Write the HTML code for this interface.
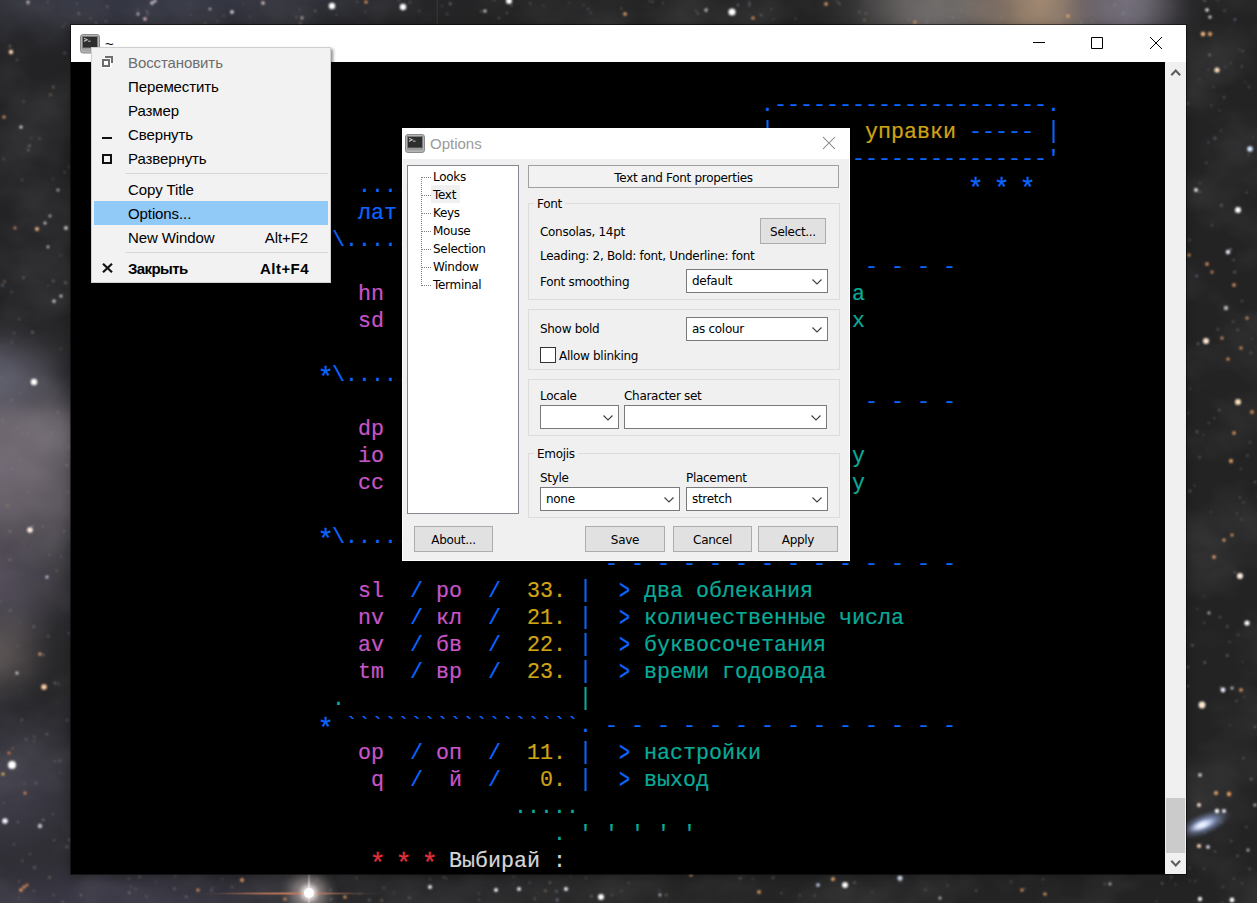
<!DOCTYPE html>
<html lang="ru"><head><meta charset="utf-8"><title>~</title>
<style>
html,body{margin:0;padding:0}
body{width:1257px;height:903px;overflow:hidden;position:relative;background:#26262a;font-family:"Liberation Sans",sans-serif}
#wall{position:absolute;left:0;top:0}
.st{position:absolute;border-radius:50%}
#win{position:absolute;left:71px;top:25px;width:1115px;height:849px;background:#000;box-shadow:0 0 0 1px rgba(0,0,0,.5),0 2px 10px rgba(0,0,0,.3)}
#tb{position:absolute;left:0;top:0;width:1115px;height:37px;background:#fff}
#term{position:absolute;left:1px;top:38px;width:1093px;height:811px;overflow:hidden;
 font-family:"Liberation Mono","DejaVu Sans Mono",monospace;font-size:21.6667px;line-height:27px;white-space:pre}
.r{position:absolute;left:0;height:27px;width:1093px}
.r span{position:absolute;top:2px;-webkit-text-stroke:0.2px currentColor}
.as{transform:translateY(3.6px) scale(1.25,1.3)}.vb{transform:scaleY(1.09);transform-origin:50% 80%}.gt{transform:translateY(1px) scale(.85,1.25)}
.b{color:#0a66ff}.p{color:#c855c8}.y{color:#cfa414}.t{color:#0aab98}.rd{color:#e0303c}.w{color:#d6d6d6}
#sb{position:absolute;left:1094px;top:37px;width:21px;height:812px;background:#f0f0f0}
#sbth{position:absolute;left:1px;top:736px;width:19px;height:55px;background:#cbcbcb}
#dlg{position:absolute;left:402px;top:128px;width:448px;height:433px;background:#fff;font-family:"DejaVu Sans","Liberation Sans",sans-serif;font-size:12px;letter-spacing:-0.3px;color:#000}
#dlg>*{position:absolute}
.dbody{left:1px;top:31px;width:446px;height:401px;background:#f0f0f0}
.dtitle{left:28px;top:6px;font:15px/19px "Liberation Sans",sans-serif;letter-spacing:0;color:#9a9a9a}
.lb{left:5px;top:37px;width:112px;height:349px;border:1px solid #828790;background:#fff;box-sizing:border-box}
.lb>*{position:absolute}
.ti{left:25px;height:18px;line-height:18px;white-space:nowrap}
.ti i{position:absolute;left:-11px;top:9px;width:9px;height:0;border-top:1px dotted #808080}
.vl{left:13px;top:11px;width:0;height:109px;border-left:1px dotted #808080}
.sel{left:23px;top:19px;width:29px;height:18px;background:#f0f0f0}
.ptitle{left:126px;top:37px;width:311px;height:23px;border:1px solid #a0a0a0;background:#f2f2f2;text-align:center;line-height:24px;box-sizing:border-box}
.grp{border:1px solid #dcdcdc;box-sizing:border-box}
.gl{background:#f0f0f0;padding:0 3px}
.lbl{line-height:16px;white-space:nowrap}
.btn{height:26px;border:1px solid #adadad;background:#e1e1e1;text-align:center;line-height:26px;box-sizing:border-box}
.cmb{height:24px;border:1px solid #7a7a7a;background:#fff;line-height:22px;padding-left:5px;box-sizing:border-box;white-space:nowrap}
.cmb svg{position:absolute;right:5px;top:9px}
.chk{width:16px;height:16px;border:1px solid #333;background:#fff;box-sizing:border-box}
#menu{position:absolute;left:91px;top:47px;width:238px;height:234px;border:1px solid #cfcfcf;background:#f2f2f2;box-shadow:2px 2px 3px rgba(0,0,0,.45);font:15px/24px "Liberation Sans",sans-serif;color:#000;letter-spacing:-0.1px}
.mi{position:absolute;left:2px;width:200px;height:24px;padding-left:34px;white-space:nowrap}
.mi.dis{color:#6d6d6d}
.hlb{position:absolute;left:2px;top:153px;width:234px;height:24px;background:#91c9f7}
.mi.bd{font-weight:bold;letter-spacing:-0.6px}
.sc{position:absolute;right:20px;top:0}
.ms{position:absolute;left:33px;width:203px;height:1px;background:#d7d7d7}
.bd .sc{letter-spacing:.45px;right:19px}
</style></head><body>
<svg id="wall" width="1257" height="903" viewBox="0 0 1257 903">
<defs><filter id="b1" x="-10%" y="-10%" width="120%" height="120%"><feGaussianBlur stdDeviation="0.8"/></filter><linearGradient id="lg" x1="0" x2="1" y1="0" y2="0"><stop offset="0" stop-color="#232325"/><stop offset="0.5" stop-color="#242425"/><stop offset="1" stop-color="#232324"/></linearGradient><filter id="tx" x="0" y="0" width="100%" height="100%"><feTurbulence type="fractalNoise" baseFrequency="0.012 0.016" numOctaves="4" seed="7"/><feColorMatrix type="matrix" values="0 0 0 0 0.58  0 0 0 0 0.57  0 0 0 0 0.6  1.6 0 0 0 -0.62"/></filter><radialGradient id="g1"><stop offset="0" stop-color="#6e6670" stop-opacity="1.000"/><stop offset="0.25" stop-color="#6e6670" stop-opacity="0.860"/><stop offset="0.45" stop-color="#6e6670" stop-opacity="0.580"/><stop offset="0.65" stop-color="#6e6670" stop-opacity="0.280"/><stop offset="0.82" stop-color="#6e6670" stop-opacity="0.090"/><stop offset="1" stop-color="#6e6670" stop-opacity="0.000"/></radialGradient><radialGradient id="g2"><stop offset="0" stop-color="#5a5a68" stop-opacity="1.000"/><stop offset="0.25" stop-color="#5a5a68" stop-opacity="0.860"/><stop offset="0.45" stop-color="#5a5a68" stop-opacity="0.580"/><stop offset="0.65" stop-color="#5a5a68" stop-opacity="0.280"/><stop offset="0.82" stop-color="#5a5a68" stop-opacity="0.090"/><stop offset="1" stop-color="#5a5a68" stop-opacity="0.000"/></radialGradient><radialGradient id="g3"><stop offset="0" stop-color="#524d59" stop-opacity="1.000"/><stop offset="0.25" stop-color="#524d59" stop-opacity="0.860"/><stop offset="0.45" stop-color="#524d59" stop-opacity="0.580"/><stop offset="0.65" stop-color="#524d59" stop-opacity="0.280"/><stop offset="0.82" stop-color="#524d59" stop-opacity="0.090"/><stop offset="1" stop-color="#524d59" stop-opacity="0.000"/></radialGradient><radialGradient id="g4"><stop offset="0" stop-color="#645c5c" stop-opacity="0.850"/><stop offset="0.25" stop-color="#645c5c" stop-opacity="0.731"/><stop offset="0.45" stop-color="#645c5c" stop-opacity="0.493"/><stop offset="0.65" stop-color="#645c5c" stop-opacity="0.238"/><stop offset="0.82" stop-color="#645c5c" stop-opacity="0.076"/><stop offset="1" stop-color="#645c5c" stop-opacity="0.000"/></radialGradient><radialGradient id="g5"><stop offset="0" stop-color="#3c3a45" stop-opacity="1.000"/><stop offset="0.25" stop-color="#3c3a45" stop-opacity="0.860"/><stop offset="0.45" stop-color="#3c3a45" stop-opacity="0.580"/><stop offset="0.65" stop-color="#3c3a45" stop-opacity="0.280"/><stop offset="0.82" stop-color="#3c3a45" stop-opacity="0.090"/><stop offset="1" stop-color="#3c3a45" stop-opacity="0.000"/></radialGradient><radialGradient id="g6"><stop offset="0" stop-color="#766f78" stop-opacity="0.700"/><stop offset="0.25" stop-color="#766f78" stop-opacity="0.602"/><stop offset="0.45" stop-color="#766f78" stop-opacity="0.406"/><stop offset="0.65" stop-color="#766f78" stop-opacity="0.196"/><stop offset="0.82" stop-color="#766f78" stop-opacity="0.063"/><stop offset="1" stop-color="#766f78" stop-opacity="0.000"/></radialGradient><radialGradient id="g7"><stop offset="0" stop-color="#26262a" stop-opacity="0.750"/><stop offset="0.25" stop-color="#26262a" stop-opacity="0.645"/><stop offset="0.45" stop-color="#26262a" stop-opacity="0.435"/><stop offset="0.65" stop-color="#26262a" stop-opacity="0.210"/><stop offset="0.82" stop-color="#26262a" stop-opacity="0.068"/><stop offset="1" stop-color="#26262a" stop-opacity="0.000"/></radialGradient><radialGradient id="g8"><stop offset="0" stop-color="#2e2d31" stop-opacity="0.600"/><stop offset="0.25" stop-color="#2e2d31" stop-opacity="0.516"/><stop offset="0.45" stop-color="#2e2d31" stop-opacity="0.348"/><stop offset="0.65" stop-color="#2e2d31" stop-opacity="0.168"/><stop offset="0.82" stop-color="#2e2d31" stop-opacity="0.054"/><stop offset="1" stop-color="#2e2d31" stop-opacity="0.000"/></radialGradient><radialGradient id="g9"><stop offset="0" stop-color="#363845" stop-opacity="1.000"/><stop offset="0.25" stop-color="#363845" stop-opacity="0.860"/><stop offset="0.45" stop-color="#363845" stop-opacity="0.580"/><stop offset="0.65" stop-color="#363845" stop-opacity="0.280"/><stop offset="0.82" stop-color="#363845" stop-opacity="0.090"/><stop offset="1" stop-color="#363845" stop-opacity="0.000"/></radialGradient><radialGradient id="g10"><stop offset="0" stop-color="#6c6866" stop-opacity="1.000"/><stop offset="0.25" stop-color="#6c6866" stop-opacity="0.860"/><stop offset="0.45" stop-color="#6c6866" stop-opacity="0.580"/><stop offset="0.65" stop-color="#6c6866" stop-opacity="0.280"/><stop offset="0.82" stop-color="#6c6866" stop-opacity="0.090"/><stop offset="1" stop-color="#6c6866" stop-opacity="0.000"/></radialGradient><radialGradient id="g11"><stop offset="0" stop-color="#a08872" stop-opacity="1.000"/><stop offset="0.25" stop-color="#a08872" stop-opacity="0.860"/><stop offset="0.45" stop-color="#a08872" stop-opacity="0.580"/><stop offset="0.65" stop-color="#a08872" stop-opacity="0.280"/><stop offset="0.82" stop-color="#a08872" stop-opacity="0.090"/><stop offset="1" stop-color="#a08872" stop-opacity="0.000"/></radialGradient><radialGradient id="g12"><stop offset="0" stop-color="#726d79" stop-opacity="1.000"/><stop offset="0.25" stop-color="#726d79" stop-opacity="0.860"/><stop offset="0.45" stop-color="#726d79" stop-opacity="0.580"/><stop offset="0.65" stop-color="#726d79" stop-opacity="0.280"/><stop offset="0.82" stop-color="#726d79" stop-opacity="0.090"/><stop offset="1" stop-color="#726d79" stop-opacity="0.000"/></radialGradient><radialGradient id="g13"><stop offset="0" stop-color="#7a6a60" stop-opacity="0.600"/><stop offset="0.25" stop-color="#7a6a60" stop-opacity="0.516"/><stop offset="0.45" stop-color="#7a6a60" stop-opacity="0.348"/><stop offset="0.65" stop-color="#7a6a60" stop-opacity="0.168"/><stop offset="0.82" stop-color="#7a6a60" stop-opacity="0.054"/><stop offset="1" stop-color="#7a6a60" stop-opacity="0.000"/></radialGradient><radialGradient id="g14"><stop offset="0" stop-color="#3b3946" stop-opacity="1.000"/><stop offset="0.25" stop-color="#3b3946" stop-opacity="0.860"/><stop offset="0.45" stop-color="#3b3946" stop-opacity="0.580"/><stop offset="0.65" stop-color="#3b3946" stop-opacity="0.280"/><stop offset="0.82" stop-color="#3b3946" stop-opacity="0.090"/><stop offset="1" stop-color="#3b3946" stop-opacity="0.000"/></radialGradient><radialGradient id="g15"><stop offset="0" stop-color="#9db4ea" stop-opacity="0.950"/><stop offset="0.25" stop-color="#9db4ea" stop-opacity="0.817"/><stop offset="0.45" stop-color="#9db4ea" stop-opacity="0.551"/><stop offset="0.65" stop-color="#9db4ea" stop-opacity="0.266"/><stop offset="0.82" stop-color="#9db4ea" stop-opacity="0.085"/><stop offset="1" stop-color="#9db4ea" stop-opacity="0.000"/></radialGradient><radialGradient id="g16"><stop offset="0" stop-color="#eef2ff" stop-opacity="1.000"/><stop offset="0.25" stop-color="#eef2ff" stop-opacity="0.860"/><stop offset="0.45" stop-color="#eef2ff" stop-opacity="0.580"/><stop offset="0.65" stop-color="#eef2ff" stop-opacity="0.280"/><stop offset="0.82" stop-color="#eef2ff" stop-opacity="0.090"/><stop offset="1" stop-color="#eef2ff" stop-opacity="0.000"/></radialGradient><radialGradient id="g17"><stop offset="0" stop-color="#cfc0bc" stop-opacity="0.750"/><stop offset="0.25" stop-color="#cfc0bc" stop-opacity="0.645"/><stop offset="0.45" stop-color="#cfc0bc" stop-opacity="0.435"/><stop offset="0.65" stop-color="#cfc0bc" stop-opacity="0.210"/><stop offset="0.82" stop-color="#cfc0bc" stop-opacity="0.068"/><stop offset="1" stop-color="#cfc0bc" stop-opacity="0.000"/></radialGradient><radialGradient id="g18"><stop offset="0" stop-color="#c07858" stop-opacity="0.900"/><stop offset="0.25" stop-color="#c07858" stop-opacity="0.774"/><stop offset="0.45" stop-color="#c07858" stop-opacity="0.522"/><stop offset="0.65" stop-color="#c07858" stop-opacity="0.252"/><stop offset="0.82" stop-color="#c07858" stop-opacity="0.081"/><stop offset="1" stop-color="#c07858" stop-opacity="0.000"/></radialGradient><radialGradient id="g19"><stop offset="0" stop-color="#d8d0d8" stop-opacity="0.850"/><stop offset="0.25" stop-color="#d8d0d8" stop-opacity="0.731"/><stop offset="0.45" stop-color="#d8d0d8" stop-opacity="0.493"/><stop offset="0.65" stop-color="#d8d0d8" stop-opacity="0.238"/><stop offset="0.82" stop-color="#d8d0d8" stop-opacity="0.076"/><stop offset="1" stop-color="#d8d0d8" stop-opacity="0.000"/></radialGradient><radialGradient id="g20"><stop offset="0" stop-color="#ffffff" stop-opacity="1.000"/><stop offset="0.25" stop-color="#ffffff" stop-opacity="0.860"/><stop offset="0.45" stop-color="#ffffff" stop-opacity="0.580"/><stop offset="0.65" stop-color="#ffffff" stop-opacity="0.280"/><stop offset="0.82" stop-color="#ffffff" stop-opacity="0.090"/><stop offset="1" stop-color="#ffffff" stop-opacity="0.000"/></radialGradient></defs>
<rect width="1257" height="903" fill="url(#lg)"/>
<ellipse cx="-10" cy="470" rx="230" ry="165" fill="url(#g1)"/>
<ellipse cx="-5" cy="378" rx="85" ry="58" fill="url(#g2)"/>
<ellipse cx="-10" cy="585" rx="110" ry="85" fill="url(#g3)"/>
<ellipse cx="-10" cy="655" rx="80" ry="60" fill="url(#g4)"/>
<ellipse cx="5" cy="790" rx="150" ry="130" fill="url(#g5)"/>
<ellipse cx="30" cy="428" rx="110" ry="34" fill="url(#g6)" transform="rotate(10 30 428)"/>
<ellipse cx="74" cy="372" rx="30" ry="55" fill="url(#g7)"/>
<ellipse cx="72" cy="610" rx="24" ry="120" fill="url(#g8)"/>
<ellipse cx="150" cy="-6" rx="330" ry="70" fill="url(#g9)"/>
<ellipse cx="935" cy="0" rx="120" ry="130" fill="url(#g10)"/>
<ellipse cx="1040" cy="0" rx="95" ry="130" fill="url(#g11)"/>
<ellipse cx="1125" cy="0" rx="80" ry="130" fill="url(#g12)"/>
<ellipse cx="990" cy="10" rx="40" ry="22" fill="url(#g13)"/>
<ellipse cx="110" cy="905" rx="300" ry="70" fill="url(#g14)"/>
<rect x="436.5" y="0" width="1.6" height="24" fill="#6a4038" opacity="0.35"/>
<rect width="1257" height="903" filter="url(#tx)" opacity="0.14"/>
<ellipse cx="1204" cy="824" rx="30" ry="12" fill="url(#g15)" transform="rotate(-22 1204 824)"/>
<ellipse cx="1202" cy="825" rx="15" ry="6" fill="url(#g16)" transform="rotate(-22 1202 825)"/>
<ellipse cx="309" cy="893" rx="30" ry="30" fill="url(#g17)"/>
<ellipse cx="290" cy="893.5" rx="95" ry="2.2" fill="url(#g18)"/>
<ellipse cx="309" cy="890" rx="2.2" ry="24" fill="url(#g19)"/>
<ellipse cx="309" cy="893" rx="12" ry="12" fill="url(#g20)"/>
<circle cx="309" cy="893" r="5" fill="#fff"/>
<g filter="url(#b1)" opacity="0.6"><circle cx="43.6" cy="655.0" r="1.3" fill="#8a8a92"/><circle cx="58.8" cy="684.0" r="0.9" fill="#8890a8"/><circle cx="3.6" cy="159.0" r="1" fill="#a08870"/><circle cx="60.8" cy="348.9" r="0.8" fill="#b08a68"/><circle cx="17.5" cy="646.0" r="1.1" fill="#7c7c86"/><circle cx="12.7" cy="761.6" r="1.1" fill="#9a9aa2"/><circle cx="53.3" cy="87.0" r="1.3" fill="#b08a68"/><circle cx="31.1" cy="138.1" r="0.8" fill="#9a9aa2"/><circle cx="54.2" cy="840.2" r="0.9" fill="#a8a8b0"/><circle cx="11.7" cy="292.0" r="0.9" fill="#b08a68"/><circle cx="61.3" cy="556.6" r="0.9" fill="#8890a8"/><circle cx="13.8" cy="844.4" r="1.1" fill="#7c7c86"/><circle cx="1.5" cy="377.8" r="0.9" fill="#7c7c86"/><circle cx="4.6" cy="281.6" r="1.3" fill="#b08a68"/><circle cx="0.2" cy="600.9" r="1" fill="#8a8a92"/><circle cx="21.7" cy="720.1" r="1.1" fill="#8890a8"/><circle cx="22.1" cy="434.1" r="0.9" fill="#8a8a92"/><circle cx="17.9" cy="822.3" r="1" fill="#a8a8b0"/><circle cx="28.3" cy="491.6" r="1.1" fill="#7c7c86"/><circle cx="26.3" cy="739.4" r="1.1" fill="#8a8a92"/><circle cx="49.5" cy="554.9" r="0.9" fill="#8a8a92"/><circle cx="52.9" cy="814.3" r="1.1" fill="#7c7c86"/><circle cx="35.9" cy="783.0" r="1" fill="#a8a8b0"/><circle cx="32.4" cy="526.1" r="1" fill="#a8a8b0"/><circle cx="20.7" cy="393.2" r="0.8" fill="#9a9aa2"/><circle cx="23.9" cy="544.0" r="0.9" fill="#7c7c86"/><circle cx="19.3" cy="621.8" r="0.8" fill="#7c7c86"/><circle cx="48.0" cy="285.6" r="0.8" fill="#8890a8"/><circle cx="10.4" cy="610.4" r="1.1" fill="#9a9aa2"/><circle cx="50.4" cy="94.7" r="1.3" fill="#b08a68"/><circle cx="64.7" cy="53.0" r="1.3" fill="#7c7c86"/><circle cx="57.8" cy="412.4" r="1.1" fill="#9a9aa2"/><circle cx="3.9" cy="802.8" r="0.8" fill="#a8a8b0"/><circle cx="34.5" cy="737.0" r="0.9" fill="#8890a8"/><circle cx="39.5" cy="138.6" r="1.1" fill="#8a8a92"/><circle cx="11.8" cy="342.3" r="0.8" fill="#a8a8b0"/><circle cx="29.4" cy="145.7" r="1.3" fill="#a8a8b0"/><circle cx="11.9" cy="468.8" r="1.1" fill="#8890a8"/><circle cx="51.1" cy="432.2" r="1" fill="#a08870"/><circle cx="28.3" cy="150.2" r="1.1" fill="#a8a8b0"/><circle cx="69.2" cy="839.9" r="1.1" fill="#a8a8b0"/><circle cx="23.7" cy="101.6" r="1" fill="#b08a68"/><circle cx="54.7" cy="761.5" r="1" fill="#8a8a92"/><circle cx="55.0" cy="683.1" r="1.3" fill="#8890a8"/><circle cx="2.4" cy="285.2" r="1.3" fill="#8890a8"/><circle cx="46.8" cy="734.3" r="1" fill="#a8a8b0"/><circle cx="68.7" cy="633.2" r="1" fill="#8890a8"/><circle cx="12.5" cy="748.3" r="1.1" fill="#b08a68"/><circle cx="54.2" cy="302.4" r="1" fill="#a08870"/><circle cx="20.2" cy="450.3" r="1" fill="#7c7c86"/><circle cx="19.2" cy="319.1" r="1.1" fill="#7c7c86"/><circle cx="64.6" cy="172.3" r="1.1" fill="#7c7c86"/><circle cx="67.0" cy="465.4" r="1.3" fill="#9a9aa2"/><circle cx="13.9" cy="333.0" r="1.1" fill="#7c7c86"/><circle cx="48.4" cy="636.3" r="1.1" fill="#9a9aa2"/><circle cx="43.2" cy="819.9" r="1.3" fill="#8890a8"/><circle cx="65.6" cy="282.7" r="1.3" fill="#a8a8b0"/><circle cx="60.7" cy="255.6" r="0.8" fill="#9a9aa2"/><circle cx="11.2" cy="400.0" r="0.9" fill="#9a9aa2"/><circle cx="53.1" cy="179.1" r="0.8" fill="#a08870"/><circle cx="68.6" cy="166.6" r="0.9" fill="#8a8a92"/><circle cx="22.2" cy="180.0" r="0.9" fill="#b08a68"/><circle cx="2.5" cy="420.6" r="1.1" fill="#8890a8"/><circle cx="42.8" cy="526.5" r="0.9" fill="#8890a8"/><circle cx="63.2" cy="26.6" r="1.1" fill="#7c7c86"/><circle cx="59.9" cy="760.7" r="1.3" fill="#7c7c86"/><circle cx="67.5" cy="492.3" r="1" fill="#8a8a92"/><circle cx="20.7" cy="460.7" r="1.3" fill="#7c7c86"/><circle cx="67.1" cy="720.1" r="1.1" fill="#a08870"/><circle cx="56.9" cy="570.7" r="1" fill="#a08870"/><circle cx="9.9" cy="531.4" r="1.3" fill="#a08870"/><circle cx="67.0" cy="846.9" r="1.3" fill="#8a8a92"/><circle cx="24.6" cy="783.7" r="0.8" fill="#a08870"/><circle cx="7.6" cy="505.8" r="1.3" fill="#b08a68"/><circle cx="9.8" cy="559.8" r="1.3" fill="#a08870"/><circle cx="30.0" cy="854.2" r="1.1" fill="#7c7c86"/><circle cx="33.6" cy="626.6" r="1.1" fill="#a8a8b0"/><circle cx="64.0" cy="531.2" r="1" fill="#8890a8"/><circle cx="68.7" cy="446.9" r="1.1" fill="#8a8a92"/><circle cx="22.3" cy="860.7" r="1.1" fill="#7c7c86"/><circle cx="10.0" cy="46.2" r="1.3" fill="#a08870"/><circle cx="17.2" cy="59.9" r="0.9" fill="#a8a8b0"/><circle cx="27.5" cy="433.3" r="1.3" fill="#7c7c86"/><circle cx="17.0" cy="428.2" r="0.8" fill="#9a9aa2"/><circle cx="34.3" cy="741.6" r="1" fill="#7c7c86"/><circle cx="34.5" cy="867.6" r="1.3" fill="#8890a8"/><circle cx="60.4" cy="772.8" r="0.8" fill="#8a8a92"/><circle cx="53.2" cy="281.0" r="1.3" fill="#8890a8"/><circle cx="23.5" cy="277.7" r="1.3" fill="#8a8a92"/><circle cx="32.5" cy="332.2" r="1.3" fill="#9a9aa2"/><circle cx="1189.6" cy="240.1" r="1.1" fill="#8890a8"/><circle cx="1251.2" cy="779.0" r="1.3" fill="#9a9aa2"/><circle cx="1188.0" cy="686.1" r="1.1" fill="#b08a68"/><circle cx="1227.3" cy="626.5" r="1.1" fill="#a8a8b0"/><circle cx="1250.8" cy="352.9" r="1.1" fill="#8890a8"/><circle cx="1246.6" cy="192.6" r="1" fill="#a08870"/><circle cx="1245.1" cy="82.0" r="0.8" fill="#8890a8"/><circle cx="1241.5" cy="519.6" r="1.1" fill="#7c7c86"/><circle cx="1197.0" cy="431.7" r="1.3" fill="#a08870"/><circle cx="1255.1" cy="482.2" r="1.1" fill="#b08a68"/><circle cx="1224.9" cy="67.2" r="0.9" fill="#7c7c86"/><circle cx="1244.4" cy="697.4" r="0.8" fill="#7c7c86"/><circle cx="1237.6" cy="855.9" r="1.1" fill="#8890a8"/><circle cx="1221.1" cy="130.6" r="0.8" fill="#9a9aa2"/><circle cx="1230.0" cy="725.0" r="0.8" fill="#8890a8"/><circle cx="1249.6" cy="869.0" r="1.1" fill="#9a9aa2"/><circle cx="1199.8" cy="183.1" r="0.9" fill="#8a8a92"/><circle cx="1230.6" cy="62.9" r="0.8" fill="#8890a8"/><circle cx="1213.5" cy="87.1" r="0.8" fill="#b08a68"/><circle cx="1227.3" cy="655.5" r="1.3" fill="#9a9aa2"/><circle cx="1187.7" cy="103.5" r="1.3" fill="#a08870"/><circle cx="1221.3" cy="821.9" r="1" fill="#8a8a92"/><circle cx="1196.7" cy="275.9" r="1.3" fill="#8890a8"/><circle cx="1234.5" cy="272.1" r="1.3" fill="#b08a68"/><circle cx="1230.5" cy="249.2" r="1.3" fill="#9a9aa2"/><circle cx="1204.8" cy="662.5" r="1.3" fill="#9a9aa2"/><circle cx="1243.6" cy="758.3" r="1.1" fill="#8890a8"/><circle cx="1214.2" cy="137.2" r="0.8" fill="#8890a8"/><circle cx="1210.9" cy="512.1" r="0.8" fill="#8a8a92"/><circle cx="1247.4" cy="455.5" r="1.1" fill="#9a9aa2"/><circle cx="1214.3" cy="418.3" r="1" fill="#8a8a92"/><circle cx="1242.8" cy="51.0" r="1.1" fill="#8a8a92"/><circle cx="1246.4" cy="827.0" r="1.1" fill="#8890a8"/><circle cx="1242.6" cy="661.7" r="0.8" fill="#8890a8"/><circle cx="1221.4" cy="205.4" r="1.3" fill="#a08870"/><circle cx="1211.8" cy="225.3" r="1" fill="#b08a68"/><circle cx="1236.4" cy="701.0" r="1.1" fill="#9a9aa2"/><circle cx="1237.6" cy="329.8" r="1" fill="#a8a8b0"/><circle cx="1231.2" cy="841.1" r="1" fill="#b08a68"/><circle cx="1189.5" cy="868.1" r="0.9" fill="#8890a8"/><circle cx="1199.6" cy="79.7" r="0.8" fill="#8a8a92"/><circle cx="1200.0" cy="191.9" r="1.1" fill="#a08870"/><circle cx="1233.3" cy="321.5" r="1.1" fill="#a08870"/><circle cx="1208.0" cy="818.5" r="1.1" fill="#7c7c86"/><circle cx="1219.6" cy="110.6" r="0.9" fill="#8890a8"/><circle cx="1198.1" cy="343.7" r="1.1" fill="#a8a8b0"/><circle cx="1248.6" cy="155.0" r="1" fill="#8a8a92"/><circle cx="1206.4" cy="163.0" r="1" fill="#8890a8"/><circle cx="1203.5" cy="434.8" r="0.8" fill="#7c7c86"/><circle cx="1251.7" cy="338.9" r="0.8" fill="#8890a8"/><circle cx="1188.5" cy="413.2" r="0.9" fill="#8a8a92"/><circle cx="1242.0" cy="301.0" r="1.1" fill="#8890a8"/><circle cx="1203.8" cy="868.6" r="0.8" fill="#9a9aa2"/><circle cx="1237.0" cy="513.4" r="0.8" fill="#b08a68"/><circle cx="1215.1" cy="851.6" r="1" fill="#8890a8"/><circle cx="1208.8" cy="422.9" r="1" fill="#8a8a92"/><circle cx="1238.3" cy="634.8" r="0.9" fill="#a8a8b0"/><circle cx="1203.8" cy="596.0" r="0.8" fill="#8890a8"/><circle cx="1229.6" cy="642.0" r="1" fill="#8a8a92"/><circle cx="1219.3" cy="410.2" r="1.1" fill="#9a9aa2"/><circle cx="1190.1" cy="491.1" r="1.3" fill="#b08a68"/><circle cx="1211.5" cy="105.6" r="0.8" fill="#9a9aa2"/><circle cx="1249.9" cy="442.5" r="1.1" fill="#8a8a92"/><circle cx="1234.8" cy="572.3" r="1.1" fill="#a08870"/><circle cx="1241.7" cy="66.6" r="1.1" fill="#a08870"/><circle cx="1208.4" cy="69.5" r="0.8" fill="#9a9aa2"/><circle cx="1199.6" cy="457.3" r="1.1" fill="#9a9aa2"/><circle cx="1224.2" cy="97.5" r="1" fill="#a8a8b0"/><circle cx="1194.6" cy="485.6" r="0.9" fill="#b08a68"/><circle cx="1192.3" cy="645.2" r="1.3" fill="#8a8a92"/><circle cx="1217.9" cy="329.3" r="1.1" fill="#b08a68"/><circle cx="1240.8" cy="468.9" r="0.9" fill="#8890a8"/><circle cx="1187.9" cy="667.2" r="1.1" fill="#a8a8b0"/><circle cx="1257.0" cy="496.2" r="0.9" fill="#7c7c86"/><circle cx="1220.8" cy="687.4" r="1" fill="#a8a8b0"/><circle cx="1215.2" cy="138.5" r="1.3" fill="#8a8a92"/><circle cx="1220.0" cy="617.2" r="1.1" fill="#b08a68"/><circle cx="1233.6" cy="259.9" r="1.1" fill="#8890a8"/><circle cx="1204.4" cy="622.7" r="1" fill="#7c7c86"/><circle cx="1249.0" cy="87.0" r="1" fill="#a08870"/><circle cx="1239.7" cy="497.6" r="1" fill="#8890a8"/><circle cx="1252.8" cy="137.5" r="0.8" fill="#a08870"/><circle cx="1197.0" cy="609.1" r="0.8" fill="#8890a8"/><circle cx="1190.3" cy="388.6" r="0.8" fill="#a8a8b0"/><circle cx="1243.4" cy="502.5" r="1" fill="#8a8a92"/><circle cx="1208.5" cy="142.5" r="1.1" fill="#8890a8"/><circle cx="1209.6" cy="54.9" r="1.3" fill="#a8a8b0"/><circle cx="1238.7" cy="49.7" r="0.8" fill="#8a8a92"/><circle cx="1254.9" cy="726.8" r="1.1" fill="#a8a8b0"/><circle cx="1205.1" cy="832.8" r="0.8" fill="#9a9aa2"/><circle cx="663.0" cy="3.0" r="0.9" fill="#7c7c86"/><circle cx="450.3" cy="3.9" r="1.3" fill="#a8a8b0"/><circle cx="205.1" cy="23.6" r="1" fill="#b08a68"/><circle cx="761.6" cy="15.1" r="0.9" fill="#a08870"/><circle cx="961.2" cy="10.4" r="1.1" fill="#8a8a92"/><circle cx="419.2" cy="10.7" r="0.9" fill="#a08870"/><circle cx="749.5" cy="4.1" r="0.8" fill="#a8a8b0"/><circle cx="839.7" cy="3.9" r="1.1" fill="#a08870"/><circle cx="749.2" cy="2.5" r="1.1" fill="#8890a8"/><circle cx="65.8" cy="23.5" r="0.8" fill="#b08a68"/><circle cx="296.4" cy="16.9" r="1" fill="#a08870"/><circle cx="583.5" cy="4.8" r="0.9" fill="#7c7c86"/><circle cx="707.0" cy="8.6" r="0.9" fill="#7c7c86"/><circle cx="442.2" cy="6.0" r="0.8" fill="#b08a68"/><circle cx="621.4" cy="8.4" r="0.9" fill="#a8a8b0"/><circle cx="299.6" cy="9.2" r="0.8" fill="#9a9aa2"/><circle cx="499.0" cy="18.1" r="1" fill="#9a9aa2"/><circle cx="1001.2" cy="18.1" r="1.1" fill="#8890a8"/><circle cx="591.0" cy="12.8" r="0.8" fill="#a8a8b0"/><circle cx="250.1" cy="16.5" r="0.8" fill="#b08a68"/><circle cx="760.9" cy="14.9" r="1.1" fill="#8a8a92"/><circle cx="398.8" cy="0.6" r="1" fill="#b08a68"/><circle cx="481.2" cy="11.4" r="1.1" fill="#a08870"/><circle cx="1234.9" cy="19.6" r="1.3" fill="#8890a8"/><circle cx="76.8" cy="3.5" r="1.1" fill="#7c7c86"/><circle cx="1204.6" cy="0.5" r="1.3" fill="#9a9aa2"/><circle cx="357.2" cy="1.9" r="0.8" fill="#a8a8b0"/><circle cx="447.3" cy="13.9" r="1.1" fill="#7c7c86"/><circle cx="1217.6" cy="0.3" r="0.9" fill="#8a8a92"/><circle cx="47.5" cy="2.1" r="1" fill="#7c7c86"/><circle cx="864.4" cy="20.1" r="1.3" fill="#b08a68"/><circle cx="706.4" cy="11.6" r="0.8" fill="#8a8a92"/><circle cx="300.5" cy="23.4" r="1.3" fill="#a08870"/><circle cx="494.5" cy="0.1" r="1.1" fill="#a08870"/><circle cx="223.9" cy="15.7" r="0.9" fill="#8890a8"/><circle cx="771.2" cy="9.3" r="0.8" fill="#a8a8b0"/><circle cx="865.8" cy="13.3" r="1" fill="#9a9aa2"/><circle cx="1114.7" cy="5.1" r="1" fill="#a8a8b0"/><circle cx="336.5" cy="14.9" r="0.9" fill="#8a8a92"/><circle cx="795.4" cy="18.4" r="0.9" fill="#8890a8"/><circle cx="78.8" cy="13.6" r="1.3" fill="#8890a8"/><circle cx="511.6" cy="5.5" r="1.1" fill="#b08a68"/><circle cx="749.5" cy="5.9" r="1.1" fill="#7c7c86"/><circle cx="106.1" cy="21.3" r="1" fill="#9a9aa2"/><circle cx="530.2" cy="3.6" r="1" fill="#b08a68"/><circle cx="697.7" cy="13.5" r="1.1" fill="#9a9aa2"/><circle cx="409.9" cy="2.5" r="1" fill="#8890a8"/><circle cx="95.8" cy="22.9" r="0.9" fill="#a8a8b0"/><circle cx="652.8" cy="1.7" r="0.9" fill="#a8a8b0"/><circle cx="588.3" cy="9.2" r="0.9" fill="#8890a8"/><circle cx="773.4" cy="19.1" r="0.8" fill="#8a8a92"/><circle cx="243.3" cy="3.8" r="0.8" fill="#7c7c86"/><circle cx="191.0" cy="14.8" r="0.8" fill="#b08a68"/><circle cx="952.9" cy="17.7" r="0.9" fill="#8890a8"/><circle cx="1123.3" cy="13.2" r="1.3" fill="#8890a8"/><circle cx="1092.6" cy="20.9" r="1" fill="#8a8a92"/><circle cx="1023.4" cy="4.7" r="1" fill="#7c7c86"/><circle cx="217.3" cy="21.4" r="0.8" fill="#9a9aa2"/><circle cx="506.9" cy="13.0" r="1.1" fill="#8a8a92"/><circle cx="147.8" cy="14.3" r="1" fill="#9a9aa2"/><circle cx="859.4" cy="11.9" r="1" fill="#8890a8"/><circle cx="90.7" cy="18.2" r="1" fill="#8a8a92"/><circle cx="146.9" cy="11.5" r="1" fill="#a8a8b0"/><circle cx="926.8" cy="22.0" r="1.1" fill="#9a9aa2"/><circle cx="365.3" cy="12.0" r="0.8" fill="#b08a68"/><circle cx="138.1" cy="9.8" r="0.8" fill="#b08a68"/><circle cx="543.5" cy="5.3" r="0.9" fill="#7c7c86"/><circle cx="837.4" cy="1.8" r="1" fill="#8a8a92"/><circle cx="695.6" cy="10.4" r="0.9" fill="#b08a68"/><circle cx="1060.7" cy="20.5" r="0.9" fill="#8a8a92"/><circle cx="568.8" cy="3.1" r="0.8" fill="#8a8a92"/><circle cx="1028.2" cy="3.4" r="0.8" fill="#8a8a92"/><circle cx="315.3" cy="11.0" r="1.1" fill="#a8a8b0"/><circle cx="649.6" cy="1.3" r="0.9" fill="#9a9aa2"/><circle cx="1224.7" cy="10.6" r="1.1" fill="#b08a68"/><circle cx="107.3" cy="6.7" r="1.1" fill="#b08a68"/><circle cx="28.3" cy="3.8" r="1.3" fill="#a08870"/><circle cx="1081.2" cy="22.6" r="1.3" fill="#8890a8"/><circle cx="738.0" cy="5.2" r="1.1" fill="#a8a8b0"/><circle cx="909.1" cy="19.5" r="1.1" fill="#a08870"/><circle cx="18.7" cy="897.8" r="0.9" fill="#7c7c86"/><circle cx="186.3" cy="896.9" r="1.1" fill="#a8a8b0"/><circle cx="1221.9" cy="902.8" r="0.9" fill="#a08870"/><circle cx="529.7" cy="882.6" r="1.1" fill="#7c7c86"/><circle cx="360.1" cy="893.7" r="0.8" fill="#a8a8b0"/><circle cx="212.7" cy="887.8" r="0.8" fill="#8890a8"/><circle cx="479.1" cy="900.1" r="0.9" fill="#9a9aa2"/><circle cx="814.7" cy="895.9" r="1.1" fill="#7c7c86"/><circle cx="752.8" cy="878.8" r="0.9" fill="#8a8a92"/><circle cx="1156.7" cy="901.3" r="0.8" fill="#8a8a92"/><circle cx="232.3" cy="887.0" r="1" fill="#9a9aa2"/><circle cx="947.6" cy="885.4" r="0.9" fill="#9a9aa2"/><circle cx="369.3" cy="900.1" r="1.3" fill="#8a8a92"/><circle cx="356.5" cy="878.0" r="1.1" fill="#7c7c86"/><circle cx="381.6" cy="900.4" r="1.3" fill="#b08a68"/><circle cx="557.3" cy="899.4" r="1.3" fill="#9a9aa2"/><circle cx="330.7" cy="890.3" r="1.1" fill="#9a9aa2"/><circle cx="298.6" cy="893.6" r="0.8" fill="#8a8a92"/><circle cx="19.1" cy="880.9" r="0.9" fill="#b08a68"/><circle cx="900.3" cy="881.6" r="1" fill="#8a8a92"/><circle cx="1011.1" cy="881.7" r="1.1" fill="#7c7c86"/><circle cx="976.1" cy="890.6" r="1.1" fill="#a08870"/><circle cx="128.9" cy="878.5" r="1" fill="#b08a68"/><circle cx="666.3" cy="895.0" r="1.3" fill="#a08870"/><circle cx="1241.9" cy="883.4" r="0.9" fill="#b08a68"/><circle cx="1171.4" cy="877.2" r="1.1" fill="#8a8a92"/><circle cx="925.4" cy="889.8" r="1.1" fill="#8a8a92"/><circle cx="1162.1" cy="883.4" r="1.3" fill="#7c7c86"/><circle cx="1042.9" cy="878.9" r="1" fill="#8a8a92"/><circle cx="621.3" cy="890.8" r="0.9" fill="#b08a68"/><circle cx="570.6" cy="876.7" r="0.8" fill="#8a8a92"/><circle cx="430.0" cy="879.0" r="1" fill="#7c7c86"/><circle cx="1024.6" cy="888.6" r="0.9" fill="#8890a8"/><circle cx="156.3" cy="882.0" r="0.8" fill="#8890a8"/><circle cx="317.2" cy="879.7" r="0.9" fill="#8890a8"/><circle cx="331.1" cy="899.5" r="1.1" fill="#a8a8b0"/><circle cx="222.4" cy="878.8" r="0.8" fill="#8890a8"/><circle cx="446.3" cy="878.5" r="1.1" fill="#8a8a92"/><circle cx="872.0" cy="892.1" r="0.8" fill="#8a8a92"/><circle cx="740.2" cy="878.3" r="1.3" fill="#b08a68"/><circle cx="556.5" cy="891.2" r="1.3" fill="#8890a8"/><circle cx="139.6" cy="876.8" r="1.3" fill="#8a8a92"/><circle cx="53.5" cy="895.0" r="1" fill="#8890a8"/><circle cx="659.3" cy="890.2" r="0.8" fill="#8890a8"/><circle cx="854.5" cy="882.7" r="1.1" fill="#a8a8b0"/><circle cx="383.8" cy="887.7" r="1" fill="#8a8a92"/><circle cx="1104.7" cy="884.0" r="1.1" fill="#a08870"/><circle cx="478.7" cy="893.4" r="1" fill="#7c7c86"/><circle cx="1190.1" cy="880.7" r="0.8" fill="#9a9aa2"/><circle cx="443.4" cy="877.2" r="1.1" fill="#a08870"/><circle cx="781.4" cy="893.2" r="0.9" fill="#9a9aa2"/><circle cx="174.5" cy="888.8" r="1.3" fill="#a08870"/><circle cx="1175.7" cy="884.6" r="0.8" fill="#9a9aa2"/><circle cx="545.4" cy="890.8" r="1.3" fill="#b08a68"/><circle cx="1195.3" cy="881.1" r="0.9" fill="#8890a8"/><circle cx="211.3" cy="890.5" r="1" fill="#a8a8b0"/><circle cx="394.1" cy="892.3" r="0.9" fill="#7c7c86"/><circle cx="534.7" cy="898.7" r="1.3" fill="#7c7c86"/><circle cx="611.8" cy="894.9" r="0.8" fill="#a8a8b0"/><circle cx="146.4" cy="896.6" r="1" fill="#8a8a92"/><circle cx="129.4" cy="892.7" r="1.3" fill="#9a9aa2"/><circle cx="62.7" cy="902.2" r="1.1" fill="#9a9aa2"/><circle cx="799.8" cy="895.3" r="1" fill="#8a8a92"/><circle cx="513.3" cy="884.2" r="0.8" fill="#7c7c86"/><circle cx="81.0" cy="895.1" r="1.1" fill="#a8a8b0"/><circle cx="513.5" cy="876.9" r="0.8" fill="#9a9aa2"/><circle cx="49.5" cy="877.6" r="1.3" fill="#a08870"/><circle cx="131.0" cy="886.7" r="0.9" fill="#a08870"/><circle cx="33.8" cy="890.8" r="1" fill="#8890a8"/><circle cx="135.6" cy="889.3" r="1" fill="#8a8a92"/><circle cx="585.9" cy="877.9" r="0.9" fill="#8a8a92"/><circle cx="773.1" cy="877.7" r="1.3" fill="#a08870"/><circle cx="549.9" cy="882.6" r="1.3" fill="#a08870"/><circle cx="1223.0" cy="887.0" r="0.9" fill="#b08a68"/><circle cx="1233.6" cy="878.7" r="0.9" fill="#9a9aa2"/><circle cx="409.4" cy="897.7" r="1.3" fill="#8a8a92"/><circle cx="175.3" cy="876.5" r="1.1" fill="#7c7c86"/><circle cx="557.1" cy="900.7" r="1.3" fill="#8890a8"/><circle cx="628.7" cy="883.0" r="1" fill="#a08870"/><circle cx="591.4" cy="896.2" r="1.3" fill="#8a8a92"/></g>
<g filter="url(#b1)">
<circle cx="11" cy="52" r="2.2" fill="#ffd9b0"/>
<circle cx="4" cy="117" r="1.5" fill="#e8a070"/>
<circle cx="21" cy="127" r="1.6" fill="#e8e8f0"/>
<circle cx="37" cy="229" r="2" fill="#f0b080"/>
<circle cx="45" cy="223" r="1.5" fill="#d0d0d8"/>
<circle cx="50" cy="216" r="1.3" fill="#c8c8d0"/>
<circle cx="15" cy="228" r="1.4" fill="#d09070"/>
<circle cx="48" cy="247" r="1.4" fill="#c0c0c8"/>
<circle cx="54" cy="301" r="1.6" fill="#e0e0e8"/>
<circle cx="61" cy="296" r="1.5" fill="#d8d8e0"/>
<circle cx="58" cy="190" r="1.5" fill="#b0b0b8"/>
<circle cx="34" cy="382" r="3.2" fill="#ffffff"/>
<circle cx="30" cy="530" r="2.8" fill="#fff0e0"/>
<circle cx="47" cy="577" r="1.6" fill="#c8d0f0"/>
<circle cx="40" cy="654" r="1.6" fill="#f0b080"/>
<circle cx="17" cy="673" r="1.5" fill="#e0e0e8"/>
<circle cx="44" cy="687" r="2.8" fill="#ffd0a0"/>
<circle cx="12" cy="765" r="4" fill="#ffffff"/>
<circle cx="3" cy="774" r="1.6" fill="#f0c060"/>
<circle cx="9" cy="753" r="1.5" fill="#e08050"/>
<circle cx="25" cy="793" r="1.5" fill="#e89060"/>
<circle cx="5" cy="821" r="2.8" fill="#f4f4ff"/>
<circle cx="40" cy="826" r="2.2" fill="#c8c8d0"/>
<circle cx="21" cy="890" r="1.8" fill="#f0a060"/>
<circle cx="27" cy="885" r="1.5" fill="#e08050"/>
<circle cx="66" cy="228" r="2" fill="#d0d0d0"/>
<circle cx="1203" cy="34" r="2.2" fill="#ffc080"/>
<circle cx="1210" cy="34" r="2" fill="#f0b070"/>
<circle cx="1217" cy="70" r="2.6" fill="#ffe0c0"/>
<circle cx="1250" cy="149" r="2.8" fill="#d8e8ff"/>
<circle cx="1196" cy="190" r="2" fill="#e8e8f0"/>
<circle cx="1238" cy="210" r="3" fill="#ffffff"/>
<circle cx="1228" cy="252" r="2.2" fill="#f0f0f8"/>
<circle cx="1207" cy="264" r="1.7" fill="#f0a060"/>
<circle cx="1212" cy="272" r="1.5" fill="#e09060"/>
<circle cx="1234" cy="285" r="1.7" fill="#f0a060"/>
<circle cx="1226" cy="308" r="2.2" fill="#c0c0c0"/>
<circle cx="1206" cy="341" r="3" fill="#ffe8d0"/>
<circle cx="1222" cy="338" r="1.5" fill="#e0a070"/>
<circle cx="1247" cy="318" r="1.5" fill="#e0a070"/>
<circle cx="1228" cy="359" r="1.6" fill="#f0a060"/>
<circle cx="1241" cy="348" r="1.5" fill="#e8a060"/>
<circle cx="1238" cy="402" r="3" fill="#ffe0c0"/>
<circle cx="1252" cy="412" r="1.8" fill="#f0a060"/>
<circle cx="1234" cy="433" r="1.7" fill="#f0a060"/>
<circle cx="1189" cy="255" r="1.6" fill="#e8a060"/>
<circle cx="1231" cy="461" r="2" fill="#f0a868"/>
<circle cx="1224" cy="540" r="1.6" fill="#f0b070"/>
<circle cx="1232" cy="535" r="1.5" fill="#e8a060"/>
<circle cx="1214" cy="557" r="1.8" fill="#f0a868"/>
<circle cx="1240" cy="576" r="3" fill="#fff0e0"/>
<circle cx="1247" cy="623" r="2.6" fill="#ffffff"/>
<circle cx="1209" cy="613" r="1.4" fill="#c0c0c8"/>
<circle cx="1223" cy="690" r="2.4" fill="#f0f0ff"/>
<circle cx="1232" cy="688" r="1.5" fill="#d0d0d8"/>
<circle cx="1241" cy="690" r="1.8" fill="#f0a060"/>
<circle cx="1202" cy="705" r="3.4" fill="#ffe8d0"/>
<circle cx="1200" cy="775" r="1.8" fill="#e8e8f0"/>
<circle cx="1216" cy="793" r="2" fill="#f0a868"/>
<circle cx="1229" cy="794" r="2.2" fill="#f0a060"/>
<circle cx="1217" cy="811" r="2.2" fill="#ffffff"/>
<circle cx="1224" cy="811" r="2" fill="#f0f0ff"/>
<circle cx="1199" cy="805" r="2" fill="#ffe0c8"/>
<circle cx="1199" cy="846" r="2.1" fill="#ffd8b8"/>
<circle cx="1208" cy="847" r="1.8" fill="#f0f0f8"/>
<circle cx="1248" cy="850" r="1.5" fill="#c0c0c8"/>
<circle cx="1255" cy="805" r="1.5" fill="#c0c0c8"/>
<circle cx="332" cy="6" r="3.2" fill="#ffffff"/>
<circle cx="403" cy="7" r="3.2" fill="#ffffff"/>
<circle cx="509" cy="1" r="3" fill="#ffffff"/>
<circle cx="366" cy="2" r="1.6" fill="#f0a060"/>
<circle cx="625" cy="14" r="1.8" fill="#f0a868"/>
<circle cx="485" cy="11" r="1.6" fill="#e0e0e8"/>
<circle cx="732" cy="12" r="3.6" fill="#ffffff"/>
<circle cx="706" cy="10" r="1.6" fill="#d0d0d8"/>
<circle cx="753" cy="18" r="1.6" fill="#f0a060"/>
<circle cx="826" cy="4" r="1.7" fill="#f0a868"/>
<circle cx="1207" cy="10" r="1.8" fill="#f0f0f8"/>
<circle cx="1210" cy="17" r="1.6" fill="#e8e8f0"/>
<circle cx="152" cy="3" r="1.7" fill="#e0d0e0"/>
<circle cx="155" cy="1" r="1.5" fill="#e0d0e0"/>
<circle cx="145" cy="19" r="1.7" fill="#e8c0c8"/>
<circle cx="138" cy="14" r="1.4" fill="#c8c8d0"/>
<circle cx="232" cy="12" r="1.8" fill="#e8e8f0"/>
<circle cx="263" cy="3" r="1.7" fill="#e8c8c8"/>
<circle cx="28" cy="2" r="1.6" fill="#d0c0d8"/>
<circle cx="210" cy="9" r="1.3" fill="#c0c0c8"/>
<circle cx="302" cy="18" r="1.4" fill="#d0b0b0"/>
<circle cx="1068" cy="16" r="1.6" fill="#f0b070"/>
<circle cx="915" cy="22" r="1.5" fill="#f0a060"/>
<circle cx="242" cy="880" r="1.9" fill="#f0a868"/>
<circle cx="198" cy="890" r="1.5" fill="#f0a060"/>
<circle cx="430" cy="887" r="2" fill="#f0f0f8"/>
<circle cx="496" cy="890" r="2" fill="#f0f0f8"/>
<circle cx="519" cy="889" r="2" fill="#e8e8f0"/>
<circle cx="566" cy="889" r="2" fill="#f0f0f8"/>
<circle cx="601" cy="897" r="3" fill="#ffffff"/>
<circle cx="24" cy="887" r="1.5" fill="#f0a060"/>
<circle cx="845" cy="885" r="3" fill="#ffffff"/>
<circle cx="900" cy="878" r="2.6" fill="#e0e8ff"/>
<circle cx="833" cy="879" r="2" fill="#f0b070"/>
<circle cx="818" cy="885" r="1.8" fill="#d0e0ff"/>
<circle cx="759" cy="892" r="1.8" fill="#f0a868"/>
<circle cx="691" cy="875" r="1.6" fill="#f0a060"/>
<circle cx="1022" cy="890" r="1.6" fill="#f0a060"/>
<circle cx="1045" cy="894" r="1.6" fill="#f0a868"/>
<circle cx="1200" cy="899" r="2.2" fill="#f0f0f8"/>
<circle cx="1232" cy="900" r="2.4" fill="#ffffff"/>
<circle cx="345" cy="897" r="1.6" fill="#f0a060"/>
<circle cx="285" cy="899" r="1.5" fill="#e09060"/>
<circle cx="940" cy="898" r="1.5" fill="#c0c0c8"/>
<circle cx="1110" cy="884" r="1.4" fill="#c0c0c8"/>
<circle cx="660" cy="895" r="1.4" fill="#c0c0c8"/>
</g>
</svg>
<div id="win">
<div id="tb"><svg style="position:absolute;left:9px;top:9px" width="20" height="20" viewBox="0 0 20 20"><rect x="0.5" y="0.5" width="19" height="18.5" rx="2.5" fill="#b4b4b4" stroke="#8a8a8a"/><rect x="2.5" y="2.5" width="15" height="11.5" fill="#2e2e2e" stroke="#7c7c7c"/><path d="M4 4.2 L7.2 5.8 L4 7.4" fill="none" stroke="#bdbdbd" stroke-width="1.2"/><rect x="8" y="6.6" width="2.6" height="1.2" fill="#a8a8a8"/><rect x="2" y="15.5" width="16" height="1.2" fill="#9a9a9a"/></svg>
<div style="position:absolute;left:34px;top:9px;font:15px/19px 'Liberation Sans',sans-serif;color:#000">~</div>
<svg style="position:absolute;left:960px;top:10px" width="140" height="16" viewBox="0 0 140 16"><path d="M2 7.5 H14 M60.5 2.5 H71.5 V13.5 H60.5 Z M119 2 L131 14 M131 2 L119 14" fill="none" stroke="#000" stroke-width="1"/></svg>
</div>
<div id="term">
<div class="r" style="top:27px"><span class="b" style="left:689px">.---------------------.</span></div>
<div class="r" style="top:54px"><span class="b vb" style="left:689px">|</span><span class="b" style="left:715px">-----</span><span class="y" style="left:793px">управки</span><span class="b" style="left:897px">-----</span><span class="b vb" style="left:975px">|</span></div>
<div class="r" style="top:81px"><span class="b" style="left:689px">'---------------------'</span></div>
<div class="r" style="top:108px"><span class="b" style="left:286px">................</span><span class="b as" style="left:897px">*</span><span class="b as" style="left:923px">*</span><span class="b as" style="left:949px">*</span></div>
<div class="r" style="top:135px"><span class="b" style="left:286px">лат</span></div>
<div class="r" style="top:162px"><span class="b as" style="left:247px">*</span><span class="b" style="left:260px">\...................</span></div>
<div class="r" style="top:189px"><span class="b" style="left:533px">- - - - - - - - - - - - - -</span></div>
<div class="r" style="top:216px"><span class="p" style="left:286px">hn</span><span class="t" style="left:780px">а</span></div>
<div class="r" style="top:243px"><span class="p" style="left:286px">sd</span><span class="t" style="left:780px">х</span></div>
<div class="r" style="top:297px"><span class="b as" style="left:247px">*</span><span class="b" style="left:260px">\...................</span></div>
<div class="r" style="top:324px"><span class="b" style="left:533px">- - - - - - - - - - - - - -</span></div>
<div class="r" style="top:351px"><span class="p" style="left:286px">dp</span></div>
<div class="r" style="top:378px"><span class="p" style="left:286px">io</span><span class="t" style="left:780px">у</span></div>
<div class="r" style="top:405px"><span class="p" style="left:286px">cc</span><span class="t" style="left:780px">у</span></div>
<div class="r" style="top:459px"><span class="b as" style="left:247px">*</span><span class="b" style="left:260px">\...................</span></div>
<div class="r" style="top:486px"><span class="b" style="left:533px">- - - - - - - - - - - - - -</span></div>
<div class="r" style="top:513px"><span class="p" style="left:286px">sl</span><span class="b" style="left:338px">/</span><span class="p" style="left:364px">ро</span><span class="b" style="left:416px">/</span><span class="y" style="left:455px">33.</span><span class="b vb" style="left:507px">|</span><span class="b gt" style="left:546px">&gt;</span><span class="t" style="left:572px">два облекания</span></div>
<div class="r" style="top:540px"><span class="p" style="left:286px">nv</span><span class="b" style="left:338px">/</span><span class="p" style="left:364px">кл</span><span class="b" style="left:416px">/</span><span class="y" style="left:455px">21.</span><span class="b vb" style="left:507px">|</span><span class="b gt" style="left:546px">&gt;</span><span class="t" style="left:572px">количественные числа</span></div>
<div class="r" style="top:567px"><span class="p" style="left:286px">av</span><span class="b" style="left:338px">/</span><span class="p" style="left:364px">бв</span><span class="b" style="left:416px">/</span><span class="y" style="left:455px">22.</span><span class="b vb" style="left:507px">|</span><span class="b gt" style="left:546px">&gt;</span><span class="t" style="left:572px">буквосочетания</span></div>
<div class="r" style="top:594px"><span class="p" style="left:286px">tm</span><span class="b" style="left:338px">/</span><span class="p" style="left:364px">вр</span><span class="b" style="left:416px">/</span><span class="y" style="left:455px">23.</span><span class="b vb" style="left:507px">|</span><span class="b gt" style="left:546px">&gt;</span><span class="t" style="left:572px">времи годовода</span></div>
<div class="r" style="top:621px"><span class="t" style="left:260px">.</span><span class="t vb" style="left:507px">|</span></div>
<div class="r" style="top:648px"><span class="b as" style="left:247px">*</span><span class="b" style="left:273px">``````````````````</span><span class="b" style="left:507px">. - - - - - - - - - - - - - -</span></div>
<div class="r" style="top:675px"><span class="p" style="left:286px">op</span><span class="b" style="left:338px">/</span><span class="p" style="left:364px">оп</span><span class="b" style="left:416px">/</span><span class="y" style="left:455px">11.</span><span class="b vb" style="left:507px">|</span><span class="b gt" style="left:546px">&gt;</span><span class="t" style="left:572px">настройки</span></div>
<div class="r" style="top:702px"><span class="p" style="left:299px">q</span><span class="b" style="left:338px">/</span><span class="p" style="left:377px">й</span><span class="b" style="left:416px">/</span><span class="y" style="left:468px">0.</span><span class="b vb" style="left:507px">|</span><span class="b gt" style="left:546px">&gt;</span><span class="t" style="left:572px">выход</span></div>
<div class="r" style="top:729px"><span class="t" style="left:442px">.....</span></div>
<div class="r" style="top:756px"><span class="t" style="left:481px">.</span><span class="t" style="left:507px">' ' ' ' '</span></div>
<div class="r" style="top:783px"><span class="rd as" style="left:299px">*</span><span class="rd as" style="left:325px">*</span><span class="rd as" style="left:351px">*</span><span class="w" style="left:377px">Выбирай :</span></div></div>
<div id="sb"><div id="sbth"></div><svg style="position:absolute;left:0;top:0" width="21" height="812" viewBox="0 0 21 812"><path d="M6.3 13.2 L10.7 8.6 L15.1 13.2 M6.3 798.8 L10.7 803.4 L15.1 798.8" fill="none" stroke="#5e5e5e" stroke-width="2.1"/></svg></div>
</div>
<div id="dlg">
<div class="dbody"></div>
<svg class="ico" style="left:3px;top:6px" width="20" height="19" viewBox="0 0 20 19"><rect x="0.5" y="0.5" width="19" height="18" rx="2.5" fill="#b4b4b4" stroke="#8a8a8a"/><rect x="2.5" y="2.5" width="15" height="11.5" fill="#2e2e2e" stroke="#7c7c7c"/><path d="M4 4.2 L7.2 5.8 L4 7.4" fill="none" stroke="#bdbdbd" stroke-width="1.2"/><rect x="8" y="6.6" width="2.6" height="1.2" fill="#a8a8a8"/><rect x="2" y="15.2" width="16" height="1.2" fill="#9a9a9a"/></svg>
<div class="dtitle">Options</div>
<svg style="left:420px;top:8px" width="14" height="14" viewBox="0 0 14 14"><path d="M1 1 L13 13 M13 1 L1 13" stroke="#7b7b7b" stroke-width="1.05" fill="none"/></svg>
<div class="lb">
 <div class="sel"></div>
 <div class="vl"></div>
 <div class="ti" style="top:2px"><i></i>Looks</div>
 <div class="ti" style="top:20px"><i></i>Text</div>
 <div class="ti" style="top:38px"><i></i>Keys</div>
 <div class="ti" style="top:56px"><i></i>Mouse</div>
 <div class="ti" style="top:74px"><i></i>Selection</div>
 <div class="ti" style="top:92px"><i></i>Window</div>
 <div class="ti" style="top:110px"><i></i>Terminal</div>
</div>
<div class="ptitle">Text and Font properties</div>
<div class="grp" style="left:126px;top:75px;width:312px;height:97px"></div>
<div class="lbl gl" style="left:132px;top:68px">Font</div>
<div class="lbl" style="left:138px;top:96px">Consolas, 14pt</div>
<div class="btn" style="left:358px;top:90px;width:66px">Select...</div>
<div class="lbl" style="left:138px;top:120px">Leading: 2, Bold: font, Underline: font</div>
<div class="lbl" style="left:138px;top:146px">Font smoothing</div>
<div class="cmb" style="left:284px;top:141px;width:142px">default<svg width="10" height="6" viewBox="0 0 10 6"><path d="M0.5 0.5 L5 5 L9.5 0.5" fill="none" stroke="#404040" stroke-width="1.1"/></svg></div>
<div class="grp" style="left:126px;top:181px;width:312px;height:61px"></div>
<div class="lbl" style="left:138px;top:193px">Show bold</div>
<div class="cmb" style="left:284px;top:189px;width:142px">as colour<svg width="10" height="6" viewBox="0 0 10 6"><path d="M0.5 0.5 L5 5 L9.5 0.5" fill="none" stroke="#404040" stroke-width="1.1"/></svg></div>
<div class="chk" style="left:138px;top:219px"></div>
<div class="lbl" style="left:157px;top:220px">Allow blinking</div>
<div class="grp" style="left:126px;top:251px;width:312px;height:57px"></div>
<div class="lbl" style="left:138px;top:260px">Locale</div>
<div class="lbl" style="left:222px;top:260px">Character set</div>
<div class="cmb" style="left:138px;top:277px;width:79px"><svg width="10" height="6" viewBox="0 0 10 6"><path d="M0.5 0.5 L5 5 L9.5 0.5" fill="none" stroke="#404040" stroke-width="1.1"/></svg></div>
<div class="cmb" style="left:222px;top:277px;width:203px"><svg width="10" height="6" viewBox="0 0 10 6"><path d="M0.5 0.5 L5 5 L9.5 0.5" fill="none" stroke="#404040" stroke-width="1.1"/></svg></div>
<div class="grp" style="left:126px;top:325px;width:312px;height:65px"></div>
<div class="lbl gl" style="left:132px;top:318px">Emojis</div>
<div class="lbl" style="left:138px;top:342px">Style</div>
<div class="lbl" style="left:284px;top:342px">Placement</div>
<div class="cmb" style="left:138px;top:359px;width:140px">none<svg width="10" height="6" viewBox="0 0 10 6"><path d="M0.5 0.5 L5 5 L9.5 0.5" fill="none" stroke="#404040" stroke-width="1.1"/></svg></div>
<div class="cmb" style="left:284px;top:359px;width:142px">stretch<svg width="10" height="6" viewBox="0 0 10 6"><path d="M0.5 0.5 L5 5 L9.5 0.5" fill="none" stroke="#404040" stroke-width="1.1"/></svg></div>
<div class="btn" style="left:12px;top:398px;width:79px">About...</div>
<div class="btn" style="left:183px;top:398px;width:80px">Save</div>
<div class="btn" style="left:271px;top:398px;width:79px">Cancel</div>
<div class="btn" style="left:356px;top:398px;width:80px">Apply</div>
</div>
<div id="menu">
<div class="mi dis" style="top:3px">Восстановить</div>
<div class="mi" style="top:27px">Переместить</div>
<div class="mi" style="top:51px">Размер</div>
<div class="mi" style="top:75px">Свернуть</div>
<div class="mi" style="top:99px">Развернуть</div>
<div class="ms" style="top:125px"></div>
<div class="mi" style="top:130px">Copy Title</div>
<div class="hlb"></div><div class="mi" style="top:154px">Options...</div>
<div class="mi" style="top:178px">New Window<span class="sc">Alt+F2</span></div>
<div class="ms" style="top:204px"></div>
<div class="mi bd" style="top:209px">Закрыть<span class="sc">Alt+F4</span></div>
<svg style="position:absolute;left:10px;top:7px" width="14" height="14" viewBox="0 0 14 14"><path d="M2 3 L9 3 L9 7.5" fill="none" stroke="#fff" stroke-width="4"/><rect x="0" y="3" width="10" height="10" fill="#fff"/><path d="M3 2 L10 2 L10 8" fill="none" stroke="#6d6d6d" stroke-width="2"/><rect x="1" y="5" width="6" height="6" fill="#fff" stroke="#6d6d6d" stroke-width="2"/></svg>
<div style="position:absolute;left:10px;top:89px;width:10px;height:2px;background:#111"></div>
<div style="position:absolute;left:10px;top:106px;width:6px;height:6px;border:2px solid #111"></div>
<svg style="position:absolute;left:10px;top:215px" width="11" height="10" viewBox="0 0 11 10"><path d="M1 0.8 L10 9.2 M10 0.8 L1 9.2" stroke="#111" stroke-width="2.2" fill="none"/></svg>
</div>
</body></html>
